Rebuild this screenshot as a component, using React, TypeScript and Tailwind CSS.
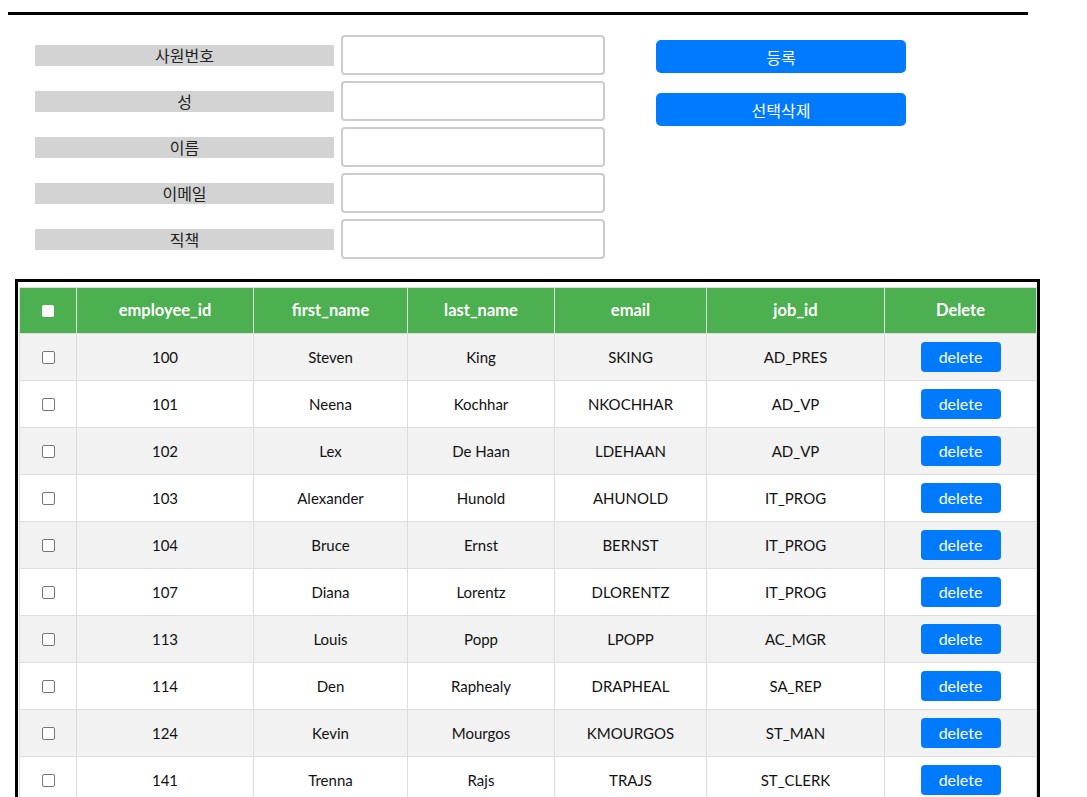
import React from "react";

const rows = [
  ["100", "Steven", "King", "SKING", "AD_PRES"],
  ["101", "Neena", "Kochhar", "NKOCHHAR", "AD_VP"],
  ["102", "Lex", "De Haan", "LDEHAAN", "AD_VP"],
  ["103", "Alexander", "Hunold", "AHUNOLD", "IT_PROG"],
  ["104", "Bruce", "Ernst", "BERNST", "IT_PROG"],
  ["107", "Diana", "Lorentz", "DLORENTZ", "IT_PROG"],
  ["113", "Louis", "Popp", "LPOPP", "AC_MGR"],
  ["114", "Den", "Raphealy", "DRAPHEAL", "SA_REP"],
  ["124", "Kevin", "Mourgos", "KMOURGOS", "ST_MAN"],
  ["141", "Trenna", "Rajs", "TRAJS", "ST_CLERK"],
];

const labels = ["사원번호", "성", "이름", "이메일", "직책"];

export default function App() {
  return (
    <div className="bg-white text-[15px] text-black h-[797px] overflow-hidden">
      <div className="pt-[12px] pl-[8px]">
        <div className="w-[1020px] h-[3px] bg-black" />
      </div>
      <div className="flex pl-[35px] pt-[20px]">
        <div className="flex flex-col gap-[6px]">
          {labels.map((l) => (
            <div key={l} className="flex items-center h-[40px]">
              <div className="w-[299px] h-[21px] bg-[#d3d3d3] flex items-center justify-center font-['Noto_Sans_CJK_KR',sans-serif] text-[16px] text-[#222] leading-none">
                {l}
              </div>
              <input className="ml-[7px] w-[264px] h-[40px] border-2 border-[#ccc] rounded-[4px] outline-none" />
            </div>
          ))}
        </div>
        <div className="ml-[51px] pt-[5px] flex flex-col gap-[20px]">
          <button className="w-[250px] h-[33px] bg-[#007bff] text-white rounded-[5px] text-[16px] font-['Noto_Sans_CJK_KR',sans-serif] leading-none">
            등록
          </button>
          <button className="w-[250px] h-[33px] bg-[#007bff] text-white rounded-[5px] text-[16px] font-['Noto_Sans_CJK_KR',sans-serif] leading-none">
            선택삭제
          </button>
        </div>
      </div>
      <div className="ml-[15px] mt-[20px] w-[1025px] border-[3px] border-black pt-[5px] pl-[1px] font-['Lato',sans-serif]">
        <table className="w-[1018px] border-collapse border border-[#ddd] text-[15px]">
          <colgroup>
            <col className="w-[57px]" />
            <col className="w-[177px]" />
            <col className="w-[154px]" />
            <col className="w-[147px]" />
            <col className="w-[152px]" />
            <col className="w-[178px]" />
            <col className="w-[152px]" />
          </colgroup>
          <thead>
            <tr className="bg-[#4caf50] text-white h-[46px] text-[16.5px]">
              <th className="border border-[#ddd] font-bold">
                <div className="w-[12px] h-[12px] bg-white rounded-[2px] mx-auto" />
              </th>
              <th className="border border-[#ddd] font-bold">employee_id</th>
              <th className="border border-[#ddd] font-bold">first_name</th>
              <th className="border border-[#ddd] font-bold">last_name</th>
              <th className="border border-[#ddd] font-bold">email</th>
              <th className="border border-[#ddd] font-bold">job_id</th>
              <th className="border border-[#ddd] font-bold">Delete</th>
            </tr>
          </thead>
          <tbody>
            {rows.map((r, i) => (
              <tr key={r[0]} className={i % 2 === 0 ? "bg-[#f2f2f2] h-[47px]" : "bg-white h-[47px]"}>
                <td className="border border-[#ddd] text-center">
                  <div className="w-[13px] h-[13px] border border-[#767676] rounded-[2px] bg-white mx-auto" />
                </td>
                {r.map((c, j) => (
                  <td key={j} className="border border-[#ddd] text-center text-[#111]">
                    {c}
                  </td>
                ))}
                <td className="border border-[#ddd] text-center">
                  <button className="w-[80px] h-[30px] bg-[#007bff] text-white rounded-[4px] text-[16px] leading-none">
                    delete
                  </button>
                </td>
              </tr>
            ))}
          </tbody>
        </table>
      </div>
    </div>
  );
}
